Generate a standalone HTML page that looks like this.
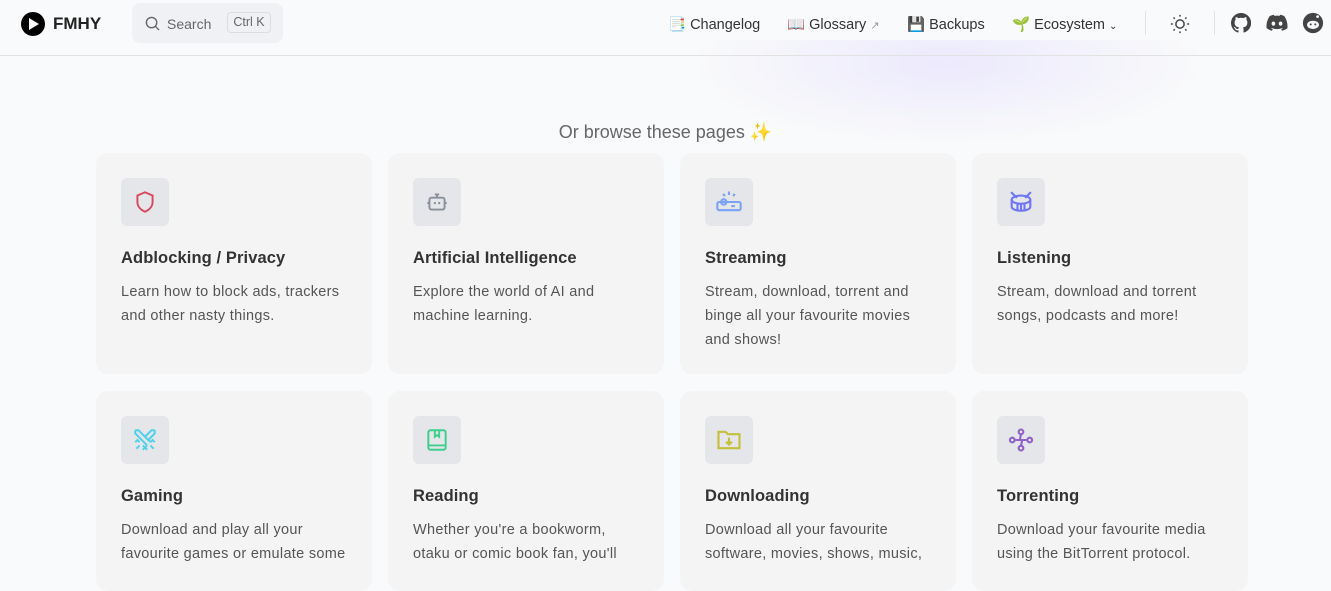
<!DOCTYPE html>
<html><head><meta charset="utf-8"><style>
*{box-sizing:border-box;margin:0;padding:0}
body{width:1331px;height:567px;overflow:hidden;background:#f9fafb;font-family:"Liberation Sans",sans-serif;color:#3c3c43;position:relative}
.nav{position:absolute;left:0;top:0;width:1331px;height:56px;border-bottom:1px solid #e2e2e3}
.glow{position:absolute;left:640px;top:40px;width:560px;height:120px;background:radial-gradient(ellipse at 55% 20%,rgba(205,195,255,.3),rgba(220,215,255,0) 60%)}
.logo{position:absolute;left:21px;top:12px;width:24px;height:24px;border-radius:50%;background:#000}
.logo:after{content:"";position:absolute;left:8px;top:6px;border-left:10px solid #fff;border-top:6px solid transparent;border-bottom:6px solid transparent}
.brand{position:absolute;left:53px;top:14px;font-size:17px;font-weight:bold;color:#222}
.search{position:absolute;left:132px;top:3px;width:151px;height:40px;background:#eff1f4;border-radius:8px}
.search span{position:absolute;left:35px;top:13px;font-size:14px;color:#666}
.kbd{position:absolute;left:95px;top:9px;width:44px;height:21px;border:1px solid #dcdde0;border-radius:4px;font-size:12.5px;color:#666;text-align:center;line-height:19px}
.ni{position:absolute;top:16px;font-size:14.5px;color:#333}
.sep{position:absolute;top:11px;width:1px;height:24px;background:#e2e2e3}
.h{position:absolute;top:122px;left:0;width:1331px;text-align:center;font-size:18px;color:#666}
.card{position:absolute;width:276px;background:#f4f4f5;border-radius:12px}
.ic{position:absolute;left:25px;top:25px;width:48px;height:48px;border-radius:6px;background:#e5e6ea;display:flex;align-items:center;justify-content:center}
.t{position:absolute;left:25px;top:96px;font-size:16.5px;font-weight:bold;color:#333;letter-spacing:.1px}
.d{position:absolute;left:25px;top:127px;width:232px;font-size:14.5px;line-height:24px;color:#555;letter-spacing:.3px}
</style></head><body>
<div class="glow"></div>
<div class="nav">
<div class="logo"></div><div class="brand">FMHY</div>
<div class="search"><svg style="position:absolute;left:13px;top:13px" width="15" height="15" viewBox="0 0 16 16" fill="none" stroke="#666" stroke-width="1.5"><circle cx="7" cy="7" r="5.5"/><path d="M11 11l4 4"/></svg><span>Search</span><div class="kbd">Ctrl K</div></div>
<div class="ni" style="left:668px">📑 Changelog</div>
<div class="ni" style="left:787px">📖 Glossary <span style="color:#999;font-size:11px">↗</span></div>
<div class="ni" style="left:907px">💾 Backups</div>
<div class="ni" style="left:1012px">🌱 Ecosystem <span style="font-size:10px">⌄</span></div>
<div class="sep" style="left:1145px"></div>
<svg style="position:absolute;left:1169px;top:13px" width="22" height="22" viewBox="0 0 24 24" fill="none" stroke="#444" stroke-width="1.6"><circle cx="12" cy="12" r="4.5"/><path d="M12 2v2M12 20v2M2 12h2M20 12h2M4.9 4.9l1.4 1.4M17.7 17.7l1.4 1.4M4.9 19.1l1.4-1.4M17.7 6.3l1.4-1.4"/></svg>
<div class="sep" style="left:1214px"></div>
<svg style="position:absolute;left:1231px;top:13px" width="20" height="20" viewBox="0 0 16 16" fill="#444"><path d="M8 0a8 8 0 00-2.5 15.6c.4.1.5-.2.5-.4v-1.4c-2.2.5-2.7-1-2.7-1-.4-.9-.9-1.2-.9-1.2-.7-.5.1-.5.1-.5.8.1 1.2.8 1.2.8.7 1.2 1.900.9 2.3.7.1-.5.3-.9.5-1.100-1.8-.2-3.6-.9-3.6-4 0-.9.3-1.6.8-2.100-.1-.2-.4-1 .1-2.100 0 0 .7-.2 2.2.8a7.5 7.5 0 014 0c1.5-1 2.2-.8 2.2-.8.4 1.100.2 1.900.1 2.100.5.6.8 1.300.8 2.100 0 3.100-1.900 3.800-3.600 4 .3.3.5.8.5 1.500v2.200c0 .2.1.5.6.4A8 8 0 008 0z"/></svg>
<svg style="position:absolute;left:1266px;top:14px" width="22" height="18" viewBox="0 0 24 18" fill="#444"><path d="M20 1.5A19 19 0 0015.4 0l-.6 1.2a18 18 0 00-5.600 0L8.600 0A19 19 0 004 1.500C1 6 .3 10.300.6 14.600A19 19 0 006.300 17.500l1.200-1.900a12 12 0 01-1.900-.9l.5-.4a13.600 13.600 0 0011.800 0l.5.4-1.900.9 1.200 1.900a19 19 0 005.700-2.900c.4-5-.8-9.300-3.400-13.100zM8.100 12c-1.100 0-2-1-2-2.300s.9-2.300 2-2.300 2 1 2 2.300-.9 2.300-2 2.300zm7.800 0c-1.100 0-2-1-2-2.300s.9-2.300 2-2.300 2 1 2 2.300-.9 2.300-2 2.300z"/></svg>
<svg style="position:absolute;left:1302px;top:12px" width="22" height="22" viewBox="0 0 24 24"><circle cx="12" cy="12" r="11" fill="#444"/><ellipse cx="12" cy="14" rx="6.5" ry="4.5" fill="#f9fafb"/><circle cx="9.5" cy="13.5" r="1.1" fill="#444"/><circle cx="14.5" cy="13.5" r="1.1" fill="#444"/><circle cx="17" cy="5" r="1.5" fill="#f9fafb"/></svg>
</div>
<div class="h">Or browse these pages ✨</div>

<div class="card" style="left:96px;top:153px;height:221px"><div class="ic"><svg width="26" height="26" viewBox="0 0 24 24" fill="none" stroke="#d9475f" stroke-width="1.8"><path d="M12 3l7 3v6c0 4.500-3.500 7.500-7 9-3.500-1.500-7-4.500-7-9V6z"/><path d="M9 12h.01M12 12h.01M15 12h.01"/></svg></div><div class="t">Adblocking / Privacy</div><div class="d">Learn how to block ads, trackers and other nasty things.</div></div>
<div class="card" style="left:388px;top:153px;height:221px"><div class="ic"><svg width="26" height="26" viewBox="0 0 24 24" fill="none" stroke="#8a9099" stroke-width="1.8"><rect x="5" y="8" width="14" height="11" rx="2"/><path d="M12 8V5M10 5h4M3 13h2M19 13h2M10 12v2M14 12v2"/></svg></div><div class="t">Artificial Intelligence</div><div class="d">Explore the world of AI and machine learning.</div></div>
<div class="card" style="left:680px;top:153px;height:221px"><div class="ic"><svg width="28" height="28" viewBox="0 0 24 24" fill="none" stroke="#7aa2f7" stroke-width="1.8"><rect x="2" y="12" width="20" height="7" rx="1.5"/><circle cx="7.5" cy="12" r="2.3"/><path d="M14 15.5h3M12 3v3M7 5l1.5 2M17 5l-1.5 2"/></svg></div><div class="t">Streaming</div><div class="d">Stream, download, torrent and binge all your favourite movies and shows!</div></div>
<div class="card" style="left:972px;top:153px;height:221px"><div class="ic"><svg width="28" height="28" viewBox="0 0 24 24" fill="none" stroke="#6f75f4" stroke-width="1.8"><ellipse cx="12" cy="10" rx="8" ry="3.5"/><path d="M4 10v6c0 2 3.500 3.500 8 3.500s8-1.500 8-3.500v-6M9 13v6M12 13.500v6M15 13v6M3.500 3.500l5 5M20.500 3.500l-5 5"/></svg></div><div class="t">Listening</div><div class="d">Stream, download and torrent songs, podcasts and more!</div></div>

<div class="card" style="left:96px;top:391px;height:200px"><div class="ic"><svg width="26" height="26" viewBox="0 0 24 24" fill="none" stroke="#4fd1e8" stroke-width="1.8"><path d="M3 3h3l11 11M3 3v3l11 11M21 3h-3L12 9M21 3v3l-6 6M14 17l-2 2 2 2M10 17l2 2-2 2M17 14l2-2 2 2M7 14l-2-2-2 2M4 20l3-3M20 20l-3-3"/></svg></div><div class="t">Gaming</div><div class="d">Download and play all your favourite games or emulate some</div></div>
<div class="card" style="left:388px;top:391px;height:200px"><div class="ic"><svg width="26" height="26" viewBox="0 0 24 24" fill="none" stroke="#3ecf8e" stroke-width="1.8"><rect x="4" y="3" width="16" height="18" rx="2"/><path d="M4 17h16M10 3v6l2-1.500 2 1.500V3"/></svg></div><div class="t">Reading</div><div class="d">Whether you're a bookworm, otaku or comic book fan, you'll</div></div>
<div class="card" style="left:680px;top:391px;height:200px"><div class="ic"><svg width="28" height="28" viewBox="0 0 24 24" fill="none" stroke="#c4c03a" stroke-width="1.8"><path d="M3 5h6l2 2h10v12H3z"/><path d="M12 10v6M9.500 13.500L12 16l2.500-2.500"/></svg></div><div class="t">Downloading</div><div class="d">Download all your favourite software, movies, shows, music,</div></div>
<div class="card" style="left:972px;top:391px;height:200px"><div class="ic"><svg width="28" height="28" viewBox="0 0 24 24" fill="none" stroke="#9061c9" stroke-width="1.8"><circle cx="12" cy="5" r="2"/><circle cx="12" cy="19" r="2"/><circle cx="4.500" cy="12" r="2"/><circle cx="19.500" cy="12" r="2"/><path d="M6.500 12h11M12 7l-1 5M12 17l1-5"/></svg></div><div class="t">Torrenting</div><div class="d">Download your favourite media using the BitTorrent protocol.</div></div>
</body></html>
